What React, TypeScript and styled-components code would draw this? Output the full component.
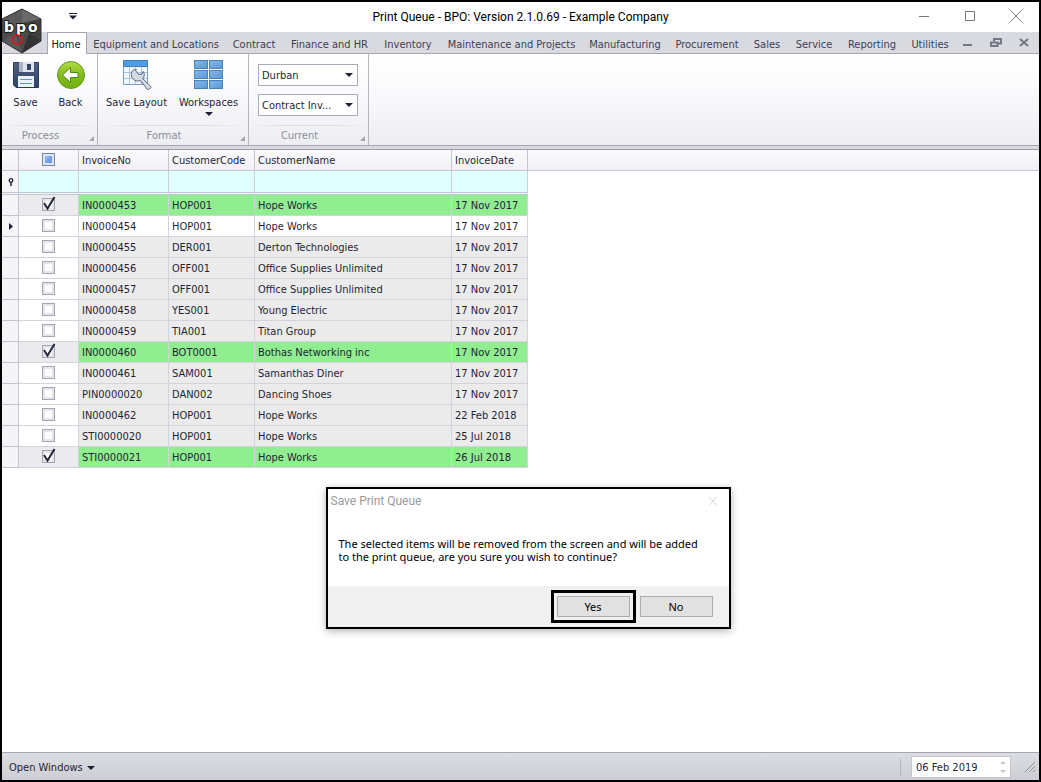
import React, { useState } from "react";
import styled, { createGlobalStyle, css } from "styled-components";

const uiFont = '"DejaVu Sans Condensed", "DejaVu Sans", sans-serif';
const dialogFont = '"Noto Sans", "Open Sans", sans-serif';
const titleFont = "Roboto, sans-serif";

const GlobalStyle = createGlobalStyle`
  *, *::before, *::after { box-sizing: border-box; }
  body { margin: 0; background: #fff; }
  button, input, select { font: inherit; color: inherit; }
`;

const AppWindow = styled.div`
  position: relative;
  display: flex;
  flex-direction: column;
  min-height: 100vh;
  border: 2px solid #000;
  background: #fff;
  color: #1f1f35;
  font: 11px/14px ${uiFont};
  white-space: nowrap;
`;

const TitleBar = styled.header`
  display: flex;
  align-items: center;
  height: 30px;
  padding: 0 14px 0 66px;
`;

const PlainButton = styled.button`
  display: inline-flex;
  align-items: center;
  justify-content: center;
  padding: 0;
  border: 0;
  background: none;
`;

const Title = styled.h1`
  flex: 1;
  margin: 0;
  padding-left: 48px;
  text-align: center;
  font: 12px/16px ${titleFont};
  color: #000;
`;

const CaptionButtons = styled.div`
  display: flex;
  gap: 28px;
`;

const Logo = styled.svg`
  position: absolute;
  left: 0;
  top: 5px;
`;

const TabBar = styled.nav`
  display: flex;
  height: 22px;
  padding: 0 9px 0 45px;
  background: #d9dae0;
  border-bottom: 1px solid #a5a6b3;
`;

const Tab = styled.button<{ $width: number; $active?: boolean }>`
  flex: 0 0 ${(p) => p.$width}px;
  padding: 4px 0 0;
  border: 0;
  background: none;
  color: #3d3d55;
  text-align: center;
  ${(p) =>
    p.$active &&
    css`
      height: 22px;
      margin-right: 1px;
      padding: 2px 2px 0 0;
      border: 1px solid #a5a6b3;
      border-bottom: 0;
      background: #fff;
      color: #15152b;
    `}
`;

const ChildControls = styled.div`
  display: flex;
  align-items: center;
  gap: 16px;
  margin-left: auto;
`;

const Ribbon = styled.section`
  display: flex;
  height: 92px;
  border-bottom: 1px solid #a5a6b0;
  background: linear-gradient(#fff, #fbfbfd 35%, #edeef2);
`;

const Group = styled.div<{ $width: number }>`
  display: flex;
  flex-direction: column;
  flex: 0 0 ${(p) => p.$width}px;
  min-width: 0;
  border-right: 1px solid #b5b6c0;
`;

const GroupBody = styled.div`
  display: flex;
  flex: 1;
  padding: 5px 0 0 5px;
`;

const GroupFields = styled(GroupBody)`
  flex-direction: column;
  gap: 8px;
  padding: 10px 10px 0 9px;
`;

const GroupCaption = styled.div`
  position: relative;
  height: 20px;
  padding: 4px 18px 0 0;
  background: linear-gradient(90deg, transparent, #dcdde3 30%, #dcdde3 70%, transparent) top / 100% 1px no-repeat;
  text-align: center;
  color: #8d8e9b;
`;

const Launcher = styled.svg`
  position: absolute;
  right: 3px;
  bottom: 4px;
`;

const RibbonButton = styled.button<{ $width: number }>`
  display: flex;
  flex-direction: column;
  align-items: center;
  gap: 6px;
  flex: 0 0 ${(p) => p.$width}px;
  padding: 0;
  border: 0;
  background: none;

  span + svg { margin-top: -4px; }
`;

const Combo = styled.label`
  position: relative;
  display: block;

  select {
    display: block;
    width: 100%;
    height: 22px;
    padding: 1px 24px 0 3px;
    border: 1px solid #a9abb8;
    border-radius: 0;
    background: #fff;
    appearance: none;
  }

  svg {
    position: absolute;
    right: 5px;
    top: 9px;
    pointer-events: none;
  }
`;

const GridArea = styled.main`
  flex: 1;
  border-top: 3px solid #d9dae0;
`;

const Grid = styled.table`
  width: 100%;
  table-layout: fixed;
  border-collapse: separate;
  border-spacing: 0;
  border-top: 1px solid #9c9da8;
`;

const HeadCell = styled.th`
  height: 21px;
  padding: 1px 0 0 3px;
  border-right: 1px solid #c4c5d0;
  border-bottom: 1px solid #c4c5d0;
  background: linear-gradient(#fafafc, #f1f1f5);
  font-weight: normal;
  text-align: left;

  &:last-child { border-right: 0; }
`;

const SelectAllCell = styled(HeadCell)`
  padding: 0;
`;

const FilterCell = styled.td<{ $blank?: boolean }>`
  height: 24px;
  padding: 0;
  border-right: 1px solid #cdced8;
  border-bottom: 3px double #c4c5d0;
  background: #e0ffff;
  ${(p) => p.$blank && "border: 0; background: #fff;"}
`;

const IndicatorCell = styled.td<{ $filter?: boolean }>`
  height: ${(p) => (p.$filter ? 24 : 21)}px;
  padding: 0 0 0 6px;
  border-right: 1px solid #c4c5d0;
  border-bottom: ${(p) => (p.$filter ? "3px double" : "1px solid")} #c4c5d0;
  background: #f5f5f8;

  svg { display: block; }
`;

type Tone = "marked" | "focused" | "plain";
const tones: Record<Tone, string> = { marked: "#90ee90", focused: "#fff", plain: "#ebebeb" };

const Cell = styled.td<{ $tone: Tone }>`
  height: 21px;
  padding: 2px 0 0 3px;
  border-right: 1px solid #d3d3de;
  border-bottom: 1px solid #d3d3de;
  background: ${(p) => tones[p.$tone]};
`;

const CheckCell = styled(Cell)`
  padding: 0;
  background: ${(p) => (p.$tone === "marked" ? "#ebebee" : "#fff")};
`;

const CheckBox = styled.label`
  position: relative;
  display: block;
  width: 13px;
  height: 14px;
  margin: 0 auto;

  input {
    display: block;
    width: 13px;
    height: 13px;
    margin: 0;
    border: 1px solid #a3a5b3;
    background: #fff;
    box-shadow: inset 0 0 0 2px #e4e5ea;
    appearance: none;
  }

  input:indeterminate {
    border-color: #7684a8;
    background: linear-gradient(135deg, #a9c8f8, #4f80dc);
    box-shadow: inset 0 0 0 2px #dfe4f0;
  }

  svg {
    position: absolute;
    left: 0;
    top: -2px;
    pointer-events: none;
  }
`;

const StatusBar = styled.footer`
  display: flex;
  align-items: center;
  height: 28px;
  padding: 0 2px 0 7px;
  border-top: 1px solid #a5a6b3;
  background: linear-gradient(#dcdde2, #cdced5);
`;

const OpenWindows = styled(PlainButton)`
  gap: 4px;
  padding-top: 2px;
`;

const DateField = styled.label`
  display: flex;
  align-items: center;
  width: 100px;
  height: 22px;
  margin: 0 13px 0 auto;
  padding-right: 4px;
  border: 1px solid #c4c5cf;
  background: #fff;

  input {
    flex: 1;
    min-width: 0;
    padding: 2px 0 0 4px;
    border: 0;
    background: none;
    outline: 0;
  }
`;

const Divider = styled.span`
  width: 1px;
  height: 18px;
  margin-left: auto;
  background: #b4b5be;

  & + ${DateField} { margin-left: 10px; }
`;

const Dialog = styled.section`
  position: absolute;
  left: calc(50% - 195px);
  top: 485px;
  width: 405px;
  border: 2px solid #000;
  background: #fff;
  box-shadow: 0 2px 8px rgba(0, 0, 0, 0.3);
  color: #000;
  font-family: ${dialogFont};
`;

const DialogHeader = styled.header`
  display: flex;
  align-items: center;
  justify-content: space-between;
  height: 24px;
  padding: 0 11px 0 3px;

  h2 {
    margin: 0;
    font: 12px/16px ${titleFont};
    color: #999;
  }
`;

const DialogText = styled.p`
  height: 73px;
  margin: 0;
  padding: 24px 11px 0;
  line-height: 13px;
`;

const DialogActions = styled.div`
  display: flex;
  align-items: center;
  justify-content: flex-end;
  gap: 10px;
  height: 41px;
  padding: 0 16px 0 0;
  background: #f0f0f0;
`;

const DialogButton = styled.button<{ $outlined?: boolean }>`
  width: 73px;
  height: 21px;
  padding: 0;
  border: 1px solid #adadad;
  background: #e1e1e1;
  ${(p) => p.$outlined && "outline: 3px solid #000; outline-offset: 3px;"}
`;

const Arrow = () => (
  <svg width="8" height="4" viewBox="0 0 8 4" aria-hidden="true">
    <path d="M0 0h8L4 4z" fill="#1f1f35" />
  </svg>
);

const LaunchMark = () => (
  <Launcher width="5" height="5" viewBox="0 0 5 5" aria-hidden="true">
    <path d="M5 0v5H0z" fill="#a3a4af" />
  </Launcher>
);

const BpoLogo = () => (
  <Logo width="40" height="48" viewBox="0 0 40 48" role="img" aria-label="BPO">
    <path d="M20 2 39 12v22L20 46 0 34V12z" fill="#4c4c4c" />
    <path d="M20 2 39 12 20 16 0 12z" fill="#6a6a6a" />
    <path d="M20 2v14L6 25 0 12z" fill="#5a5a5a" />
    <path d="M39 12v22l-12-8-7-10z" fill="#3f3f3f" />
    <path d="M0 34l13-8 7 20z" fill="#585858" />
    <path d="M20 46l7-20 12 8z" fill="#333" />
    <path d="M20 2 39 12v22L20 46 0 34V12z" fill="none" stroke="#353535" />
    <text
      x="2 14 26"
      y="25"
      fontFamily="DejaVu Sans"
      fontSize="14"
      fontWeight="bold"
      fill="#fff"
      stroke="#1c1c1c"
      strokeWidth="2"
      paintOrder="stroke"
    >
      bpo
    </text>
    <path d="M10.500 30l4.500-2.500 4.500 2.500v5l-4.500 2.500-4.500-2.500z" fill="none" stroke="#d8141c" strokeWidth="1.500" />
  </Logo>
);

const SaveIcon = () => (
  <svg width="30" height="31" viewBox="0 0 30 31" aria-hidden="true">
    <defs>
      <linearGradient id="disk" x1="0" y1="0" x2="0" y2="1">
        <stop offset="0" stopColor="#4d5f80" />
        <stop offset="1" stopColor="#2e4366" />
      </linearGradient>
    </defs>
    <path d="M2.500 3.500h25v25H5l-2.500-2.500z" fill="url(#disk)" stroke="#2b3a58" />
    <path d="M8 3h15v10H8z" fill="#dfe4ec" />
    <path d="M8 3h4v10H8z" fill="#aab4c6" />
    <path d="M16 5h4v6h-4z" fill="#33456a" />
    <path d="M7 17h16v11H7z" fill="#eaf3fc" />
    <path d="M9 20.500h12M9 24.500h12" stroke="#5f9ad8" />
  </svg>
);

const BackIcon = () => (
  <svg width="30" height="31" viewBox="0 0 30 31" aria-hidden="true">
    <defs>
      <linearGradient id="back" x1="0" y1="0" x2="0" y2="1">
        <stop offset="0" stopColor="#b4dc46" />
        <stop offset="0.500" stopColor="#84bb1c" />
        <stop offset="1" stopColor="#74b010" />
      </linearGradient>
    </defs>
    <circle cx="15" cy="16" r="13.500" fill="url(#back)" stroke="#5f9a1a" />
    <path d="M6.500 16l8-7.500v5h7.500v5h-7.500v5z" fill="#fff" stroke="#4f8a14" />
  </svg>
);

const LayoutIcon = () => (
  <svg width="32" height="31" viewBox="0 0 32 31" aria-hidden="true">
    <path d="M2.500 1.500h24v24h-24z" fill="#f2f7fd" stroke="#7b9cc9" />
    <path d="M2.500 1.500h24v6h-24z" fill="#4f9ce0" stroke="#3f7fc0" />
    <path d="M8.500 8v17M14.500 8v17M20.500 8v17M3 13.500h23M3 19.500h23" stroke="#a9c3e4" />
    <path
      d="M10.500 17c-1-4 1.500-7 5-6.500l-1 1 3 4 3.500-.5 1-2.500c2 2 1.500 5.500-.5 7l8 7.500c1.500 2-1.500 4.500-3.500 3l-6.500-8.500c-4 1.500-8-.5-9-4.500z"
      fill="#d5d9e2"
      stroke="#5c6880"
      strokeLinejoin="round"
    />
  </svg>
);

const WorkspacesIcon = () => (
  <svg width="30" height="31" viewBox="0 0 30 31" aria-hidden="true">
    <defs>
      <linearGradient id="tile" x1="0" y1="0" x2="1" y2="1">
        <stop offset="0" stopColor="#86baea" />
        <stop offset="1" stopColor="#5a98d6" />
      </linearGradient>
    </defs>
    {[1, 11, 21].map((y) =>
      [0, 15].map((x) => (
        <rect key={`${x}-${y}`} x={x + 0.5} y={y + 0.5} width="13" height="8" fill="url(#tile)" stroke="#4a80bb" />
      ))
    )}
  </svg>
);

const tabs: [string, number][] = [
  ["Equipment and Locations", 136],
  ["Contract", 60],
  ["Finance and HR", 91],
  ["Inventory", 66],
  ["Maintenance and Projects", 141],
  ["Manufacturing", 86],
  ["Procurement", 78],
  ["Sales", 42],
  ["Service", 52],
  ["Reporting", 64],
  ["Utilities", 52],
];

const invoices: [string, string, string, string, Tone][] = [
  ["IN0000453", "HOP001", "Hope Works", "17 Nov 2017", "marked"],
  ["IN0000454", "HOP001", "Hope Works", "17 Nov 2017", "focused"],
  ["IN0000455", "DER001", "Derton Technologies", "17 Nov 2017", "plain"],
  ["IN0000456", "OFF001", "Office Supplies Unlimited", "17 Nov 2017", "plain"],
  ["IN0000457", "OFF001", "Office Supplies Unlimited", "17 Nov 2017", "plain"],
  ["IN0000458", "YES001", "Young Electric", "17 Nov 2017", "plain"],
  ["IN0000459", "TIA001", "Titan Group", "17 Nov 2017", "plain"],
  ["IN0000460", "BOT0001", "Bothas Networking inc", "17 Nov 2017", "marked"],
  ["IN0000461", "SAM001", "Samanthas Diner", "17 Nov 2017", "plain"],
  ["PIN0000020", "DAN002", "Dancing Shoes", "17 Nov 2017", "plain"],
  ["IN0000462", "HOP001", "Hope Works", "22 Feb 2018", "plain"],
  ["STI0000020", "HOP001", "Hope Works", "25 Jul 2018", "plain"],
  ["STI0000021", "HOP001", "Hope Works", "26 Jul 2018", "marked"],
];

function InvoiceRow({ invoice }: { invoice: (typeof invoices)[number] }) {
  const [no, code, name, date, tone] = invoice;
  const [checked, setChecked] = useState(tone === "marked");
  const shown: Tone = checked ? "marked" : tone === "marked" ? "plain" : tone;
  return (
    <tr>
      <IndicatorCell>
        {tone === "focused" && (
          <svg width="5" height="7" viewBox="0 0 5 7" aria-hidden="true">
            <path d="M1 0l4 3.500L1 7z" fill="#1f1f35" />
          </svg>
        )}
      </IndicatorCell>
      <CheckCell $tone={shown}>
        <CheckBox>
          <input type="checkbox" aria-label={`Select ${no}`} checked={checked} onChange={() => setChecked(!checked)} />
          {checked && (
            <svg width="14" height="15" viewBox="0 0 14 15" aria-hidden="true">
              <path d="M2 7l3.500 5.500L12.500 1" fill="none" stroke="#26263c" strokeWidth="2" />
            </svg>
          )}
        </CheckBox>
      </CheckCell>
      <Cell $tone={shown}>{no}</Cell>
      <Cell $tone={shown}>{code}</Cell>
      <Cell $tone={shown}>{name}</Cell>
      <Cell $tone={shown}>{date}</Cell>
    </tr>
  );
}

export default function App() {
  return (
    <AppWindow>
      <GlobalStyle />
      <TitleBar>
        <PlainButton aria-label="Customize quick access">
          <svg width="10" height="9" viewBox="0 0 10 9" aria-hidden="true">
            <path d="M1 .5h8" stroke="#1f1f35" />
            <path d="M1 2.500h8L5 6.500z" fill="#1f1f35" />
          </svg>
        </PlainButton>
        <Title>Print Queue - BPO: Version 2.1.0.69 - Example Company</Title>
        <CaptionButtons>
          <PlainButton aria-label="Minimize">
            <svg width="18" height="14" viewBox="0 0 18 14"><path d="M4 6.500h10" stroke="#777" /></svg>
          </PlainButton>
          <PlainButton aria-label="Maximize">
            <svg width="18" height="14" viewBox="0 0 18 14"><path d="M4.500 1.500h9v9h-9z" fill="none" stroke="#777" /></svg>
          </PlainButton>
          <PlainButton aria-label="Close">
            <svg width="18" height="14" viewBox="0 0 18 14"><path d="M3 0l12 12M15 0L3 12" stroke="#777" /></svg>
          </PlainButton>
        </CaptionButtons>
      </TitleBar>

      <TabBar>
        <Tab $width={40} $active>Home</Tab>
        {tabs.map(([name, width]) => (
          <Tab key={name} $width={width}>{name}</Tab>
        ))}
        <ChildControls>
          <PlainButton aria-label="Minimize child window">
            <svg width="12" height="10" viewBox="0 0 12 10"><path d="M1 7h9" stroke="#747684" strokeWidth="2" /></svg>
          </PlainButton>
          <PlainButton aria-label="Restore child window">
            <svg width="12" height="10" viewBox="0 0 12 10">
              <path d="M4 3.500V1h7v4.500H8" fill="none" stroke="#747684" strokeWidth="2" />
              <path d="M1 4.500h6.500V8H1z" fill="none" stroke="#747684" strokeWidth="2" />
            </svg>
          </PlainButton>
          <PlainButton aria-label="Close child window">
            <svg width="12" height="10" viewBox="0 0 12 10"><path d="M2 1l8 7M10 1L2 8" stroke="#747684" strokeWidth="2" /></svg>
          </PlainButton>
        </ChildControls>
      </TabBar>
      <BpoLogo />

      <Ribbon>
        <Group $width={96}>
          <GroupBody>
            <RibbonButton $width={37}><SaveIcon /><span>Save</span></RibbonButton>
            <RibbonButton $width={53}><BackIcon /><span>Back</span></RibbonButton>
          </GroupBody>
          <GroupCaption>Process<LaunchMark /></GroupCaption>
        </Group>
        <Group $width={151}>
          <GroupBody>
            <RibbonButton $width={67}><LayoutIcon /><span>Save Layout</span></RibbonButton>
            <RibbonButton $width={77}><WorkspacesIcon /><span>Workspaces</span><Arrow /></RibbonButton>
          </GroupBody>
          <GroupCaption>Format<LaunchMark /></GroupCaption>
        </Group>
        <Group $width={120}>
          <GroupFields>
            <Combo>
              <select aria-label="Site" defaultValue="Durban"><option>Durban</option></select>
              <Arrow />
            </Combo>
            <Combo>
              <select aria-label="Queue type"><option>Contract Inv...</option></select>
              <Arrow />
            </Combo>
          </GroupFields>
          <GroupCaption>Current<LaunchMark /></GroupCaption>
        </Group>
      </Ribbon>

      <GridArea>
        <Grid>
          <colgroup>
            <col width="17" />
            <col width="60" />
            <col width="90" />
            <col width="86" />
            <col width="197" />
            <col width="76" />
            <col />
          </colgroup>
          <thead>
            <tr>
              <HeadCell />
              <SelectAllCell>
                <CheckBox>
                  <input
                    type="checkbox"
                    aria-label="Select all"
                    ref={(el) => {
                      if (el) el.indeterminate = true;
                    }}
                  />
                </CheckBox>
              </SelectAllCell>
              <HeadCell>InvoiceNo</HeadCell>
              <HeadCell>CustomerCode</HeadCell>
              <HeadCell>CustomerName</HeadCell>
              <HeadCell>InvoiceDate</HeadCell>
              <HeadCell />
            </tr>
          </thead>
          <tbody>
            <tr>
              <IndicatorCell $filter>
                <svg width="6" height="8" viewBox="0 0 6 8" aria-hidden="true">
                  <path d="M3 4v4" stroke="#1f1f35" strokeWidth="1.500" />
                  <circle cx="3" cy="2.500" r="1.800" fill="#fff" stroke="#1f1f35" strokeWidth="1.300" />
                </svg>
              </IndicatorCell>
              <FilterCell />
              <FilterCell />
              <FilterCell />
              <FilterCell />
              <FilterCell />
              <FilterCell $blank />
            </tr>
            {invoices.map((invoice) => (
              <InvoiceRow key={invoice[0]} invoice={invoice} />
            ))}
          </tbody>
        </Grid>
      </GridArea>

      <StatusBar>
        <OpenWindows>Open Windows<Arrow /></OpenWindows>
        <Divider />
        <DateField>
          <input type="text" aria-label="Date" defaultValue="06 Feb 2019" />
          <svg width="6" height="14" viewBox="0 0 6 14" aria-hidden="true">
            <path d="M0 4h6L3 1zM0 10h6l-3 3z" fill="#c6c7cc" />
          </svg>
        </DateField>
        <svg width="13" height="13" viewBox="0 0 13 13" aria-hidden="true">
          <path d="M1 12L11 2M5 12l6-6M9 12l2-2" stroke="#8f909c" />
        </svg>
      </StatusBar>

      <Dialog role="dialog" aria-labelledby="dialog-title">
        <DialogHeader>
          <h2 id="dialog-title">Save Print Queue</h2>
          <PlainButton aria-label="Close dialog">
            <svg width="10" height="10" viewBox="0 0 10 10"><path d="M1 1l8 8M9 1L1 9" stroke="#d5d5d5" /></svg>
          </PlainButton>
        </DialogHeader>
        <DialogText>
          The selected items will be removed from the screen and will be added
          <br />
          to the print queue, are you sure you wish to continue?
        </DialogText>
        <DialogActions>
          <DialogButton $outlined>Yes</DialogButton>
          <DialogButton>No</DialogButton>
        </DialogActions>
      </Dialog>
    </AppWindow>
  );
}
